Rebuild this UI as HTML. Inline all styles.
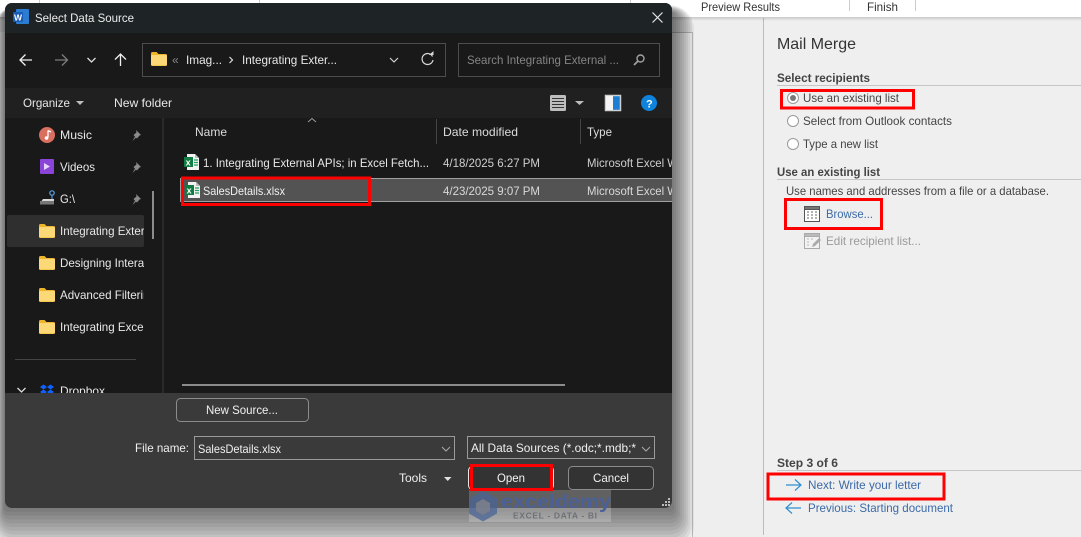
<!DOCTYPE html>
<html><head><meta charset="utf-8"><style>
html,body{margin:0;padding:0;background:#efefef;overflow:hidden}
svg{display:block;background:#efefef}
text{font-family:"Liberation Sans",sans-serif;font-size:12px}
.w text{fill:#e8e8e8}
.d text{fill:#444}
</style></head><body>
<svg width="1081" height="537" viewBox="0 0 1081 537" xmlns="http://www.w3.org/2000/svg">
<defs>
<clipPath id="side"><rect x="7" y="118" width="137" height="275"/></clipPath>
<clipPath id="main"><rect x="5" y="118" width="667" height="275"/></clipPath>
<clipPath id="dlg"><rect x="5" y="3" width="667" height="505" rx="7"/></clipPath>
<linearGradient id="rb" x1="0" y1="0" x2="0" y2="1"><stop offset="0" stop-color="#000" stop-opacity=".16"/><stop offset="1" stop-color="#000" stop-opacity="0"/></linearGradient>
<g id="folder"><path d="M0 1.500a1.500 1.500 0 0 1 1.500-1.500h4l2 2h7a1.500 1.500 0 0 1 1.500 1.500v9a1.500 1.500 0 0 1-1.500 1.500h-13a1.500 1.500 0 0 1-1.500-1.500z" fill="#f0b429"/><rect x="0" y="3" width="16" height="10.500" rx="1" fill="#fcd877"/></g>
<g id="xl"><path d="M3 0h8l4 4v12h-12z" fill="#f2f2f2"/><path d="M11 0l4 4h-4z" fill="#bbb"/><rect x="0" y="3" width="9" height="10" fill="#107c41"/><text x="1.600" y="11.600" style="font-size:9px;font-weight:bold;fill:#fff">x</text><path d="M10 6h4M10 8.500h4M10 11h4" stroke="#21a366" stroke-width="1.200"/></g>
<g id="pin"><path d="M5 0l5 5-1.500.5-2.500 3-1-1-3.500 3.500 2.500-4.500-1.500-1.500 3-2.500z" fill="#8b8b8b"/></g>
</defs>

<!-- background -->
<rect width="1081" height="537" fill="#efefef"/>
<rect x="0" y="17" width="692" height="15" fill="#e8e8e8"/>
<rect x="693" y="18" width="70" height="519" fill="#eeeeee"/>
<rect x="0" y="32" width="692" height="505" fill="#f8f8f8"/>
<rect x="672" y="32" width="21" height="1" fill="#bbb"/>
<rect x="692" y="32" width="1" height="505" fill="#bbb"/>
<rect x="763" y="18" width="1" height="517" fill="#bcbcbc"/>
<rect x="0" y="0" width="1081" height="17" fill="#fff"/>
<rect x="0" y="17" width="1081" height="4" fill="url(#rb)"/>
<rect x="39" y="0" width="1" height="3" fill="#ccc"/><rect x="259" y="0" width="1" height="3" fill="#ccc"/><rect x="630" y="0" width="1" height="3" fill="#ccc"/>
<rect x="849" y="0" width="1" height="11" fill="#ccc"/><rect x="915" y="0" width="1" height="11" fill="#ccc"/>
<text x="701" y="11" textLength="79" lengthAdjust="spacingAndGlyphs" fill="#333">Preview Results</text>
<text x="867" y="11" textLength="31" lengthAdjust="spacingAndGlyphs" fill="#333">Finish</text>

<!-- Mail merge pane -->
<text x="777" y="49" textLength="79" lengthAdjust="spacingAndGlyphs" fill="#333" style="font-size:16px">Mail Merge</text>
<text x="777" y="82" textLength="93" lengthAdjust="spacingAndGlyphs" fill="#444" style="font-weight:bold">Select recipients</text>
<rect x="777" y="85" width="304" height="1" fill="#c6c6c6"/>
<g fill="#fff" stroke="#9a9a9a"><circle cx="793" cy="98" r="5.500"/><circle cx="793" cy="121" r="5.500"/><circle cx="793" cy="144" r="5.500"/></g>
<circle cx="793" cy="98" r="3" fill="#777"/>
<g class="d">
<text x="803" y="102" textLength="96" lengthAdjust="spacingAndGlyphs">Use an existing list</text>
<text x="803" y="125" textLength="149" lengthAdjust="spacingAndGlyphs">Select from Outlook contacts</text>
<text x="803" y="148" textLength="75" lengthAdjust="spacingAndGlyphs">Type a new list</text>
<text x="786" y="195" textLength="263" lengthAdjust="spacingAndGlyphs">Use names and addresses from a file or a database.</text>
</g>
<text x="777" y="176" textLength="103" lengthAdjust="spacingAndGlyphs" fill="#444" style="font-weight:bold">Use an existing list</text>
<rect x="777" y="179" width="304" height="1" fill="#c6c6c6"/>
<!-- browse icon -->
<rect x="804.500" y="206.500" width="15" height="15" fill="#fff" stroke="#555"/>
<rect x="804.500" y="206.500" width="15" height="3" fill="#777" stroke="#555"/>
<path d="M807 212h2M811 212h2M815 212h2M807 215h2M811 215h2M815 215h2M807 218h2M811 218h2M815 218h2" stroke="#666"/>
<text x="826" y="218" textLength="47" lengthAdjust="spacingAndGlyphs" fill="#3b6aa8">Browse...</text>
<!-- edit icon -->
<rect x="804.500" y="233.500" width="15" height="15" fill="#f2f2f2" stroke="#aaa"/>
<rect x="804.500" y="233.500" width="15" height="3" fill="#bbb" stroke="#aaa"/>
<path d="M807 239h2M811 239h2M807 242h2M807 245h2" stroke="#bbb"/>
<path d="M812 247l1-3 6-6 2 2-6 6z" fill="#aaa"/>
<text x="826" y="245" textLength="95" lengthAdjust="spacingAndGlyphs" fill="#9a9a9a">Edit recipient list...</text>

<text x="777" y="467" textLength="61" lengthAdjust="spacingAndGlyphs" fill="#444" style="font-weight:bold">Step 3 of 6</text>
<rect x="777" y="470" width="304" height="1" fill="#c6c6c6"/>
<path d="M786 485h15M795 479.500l6 5.500-6 5.500" fill="none" stroke="#2f8fd0" stroke-width="1.200"/>
<text x="808" y="489" textLength="113" lengthAdjust="spacingAndGlyphs" fill="#3b6aa8">Next: Write your letter</text>
<path d="M801 508h-15M792 502.500l-6 5.500 6 5.500" fill="none" stroke="#2f8fd0" stroke-width="1.200"/>
<text x="808" y="512" textLength="145" lengthAdjust="spacingAndGlyphs" fill="#3b6aa8">Previous: Starting document</text>

<!-- shadow: stacked translucent rounded rects -->
<g fill="#000" fill-opacity=".06">
<rect x="4" y="11.400" width="670" height="500.400" rx="4"/>
<rect x="3" y="10.800" width="673" height="504.800" rx="6"/>
<rect x="2" y="10.200" width="676" height="509.200" rx="8"/>
<rect x="1" y="9.600" width="679" height="513.600" rx="10"/>
<rect x="0" y="9" width="682" height="518" rx="12"/>
<rect x="-1" y="8.400" width="685" height="522.400" rx="14"/>
<rect x="-2" y="7.800" width="688" height="526.800" rx="16"/>
<rect x="-3" y="7.200" width="691" height="531.200" rx="18"/>
<rect x="-4" y="6.600" width="694" height="535.600" rx="20"/>
<rect x="-5" y="6" width="697" height="540" rx="22"/>
<rect x="-6" y="5.400" width="700" height="544.400" rx="24"/>
</g>

<!-- dialog -->
<g clip-path="url(#dlg)">
<rect x="5" y="3" width="667" height="505" fill="#3a3a3a"/>
<rect x="5" y="3" width="667" height="30" fill="#1e2326"/>
<rect x="5" y="33" width="667" height="55" fill="#191919"/>
<rect x="5" y="88" width="667" height="30" fill="#202020"/>
<rect x="5" y="118" width="667" height="275" fill="#191919"/>
<rect x="162" y="118" width="2" height="275" fill="#2a2a2a"/>
</g>

<!-- title -->
<rect x="16" y="9" width="13" height="15" rx="1" fill="#2b7cd3"/>
<rect x="13" y="12" width="10" height="10" rx="1" fill="#1a5bb5"/>
<text x="14" y="20.500" style="font-size:8.500px;font-weight:bold;fill:#fff">W</text>
<text x="35" y="22" textLength="99" lengthAdjust="spacingAndGlyphs" fill="#ececec">Select Data Source</text>
<path d="M652.500 12.500l10 10M662.500 12.500l-10 10" stroke="#e8e8e8" stroke-width="1.200"/>

<!-- nav -->
<path d="M32 60h-11.500M25.500 54.500l-5.500 5.500 5.500 5.500" fill="none" stroke="#f0f0f0" stroke-width="1.300"/>
<path d="M55 60h12M62 54.500l5.500 5.500-5.500 5.500" fill="none" stroke="#7d7d7d" stroke-width="1.300"/>
<path d="M87.500 58l4 4 4-4" fill="none" stroke="#ddd" stroke-width="1.300"/>
<path d="M120.500 66v-11.500M115 59.500l5.500-5.500 5.500 5.500" fill="none" stroke="#f0f0f0" stroke-width="1.300"/>
<rect x="142.500" y="43.500" width="303" height="33" fill="none" stroke="#4d4d4d"/>
<use href="#folder" x="151" y="52"/>
<text x="172" y="64" fill="#888">«</text>
<g class="w">
<text x="186" y="64" textLength="36" lengthAdjust="spacingAndGlyphs">Imag...</text>
<text x="242" y="64" textLength="95" lengthAdjust="spacingAndGlyphs">Integrating Exter...</text>
</g>
<path d="M229.500 57l3 3-3 3" fill="none" stroke="#e0e0e0" stroke-width="1.200"/>
<path d="M390 58l4 4 4-4" fill="none" stroke="#ddd" stroke-width="1.100"/>
<path d="M432.500 56.500a5.500 5.500 0 1 0 .5 3.500" fill="none" stroke="#d8d8d8" stroke-width="1.200"/><path d="M429 55h4.500v-4z" fill="#d8d8d8"/>
<rect x="458.500" y="43.500" width="201" height="33" fill="none" stroke="#4d4d4d"/>
<text x="467" y="64" textLength="152" lengthAdjust="spacingAndGlyphs" fill="#858585">Search Integrating External ...</text>
<circle cx="640.500" cy="58.500" r="3.500" fill="none" stroke="#a0a0a0" stroke-width="1.400"/><path d="M638 61l-4 4" stroke="#a0a0a0" stroke-width="1.800"/>

<!-- toolbar -->
<g class="w">
<text x="23" y="107" textLength="47" lengthAdjust="spacingAndGlyphs">Organize</text>
<text x="114" y="107" textLength="58" lengthAdjust="spacingAndGlyphs">New folder</text>
</g>
<path d="M76 101h8l-4 4z" fill="#bdbdbd"/>
<rect x="550" y="95" width="16" height="16" rx="1.500" fill="#bdbdbd"/>
<path d="M552 98.500h12M552 101.500h12M552 104.500h12M552 107.500h12" stroke="#333" stroke-width="1"/>
<path d="M575 101h9l-4.500 4z" fill="#bdbdbd"/>
<rect x="605.500" y="95.500" width="15" height="15" fill="#1a7fd4" stroke="#cfcfcf" stroke-width="1.500"/>
<rect x="606" y="96" width="7" height="14" fill="#f4f4f4"/>
<circle cx="649" cy="103" r="8" fill="#0f83dc"/>
<text x="646" y="107.500" style="font-size:11px;font-weight:bold;fill:#fff">?</text>

<!-- sidebar -->
<g clip-path="url(#main)">
<rect x="7" y="215" width="137" height="32" rx="2" fill="#2f2f2f"/>
<g clip-path="url(#side)" class="w">
<text x="60" y="139" textLength="32" lengthAdjust="spacingAndGlyphs">Music</text>
<text x="60" y="171" textLength="35" lengthAdjust="spacingAndGlyphs">Videos</text>
<text x="60" y="203" textLength="15" lengthAdjust="spacingAndGlyphs">G:\</text>
<text x="60" y="235" textLength="100" lengthAdjust="spacingAndGlyphs">Integrating External</text>
<text x="60" y="267" textLength="108" lengthAdjust="spacingAndGlyphs">Designing Interactive</text>
<text x="60" y="299" textLength="96" lengthAdjust="spacingAndGlyphs">Advanced Filtering</text>
<text x="60" y="331" textLength="99" lengthAdjust="spacingAndGlyphs">Integrating Excel to</text>
<text x="60" y="395" textLength="45" lengthAdjust="spacingAndGlyphs">Dropbox</text>
</g>
<circle cx="47" cy="135" r="8" fill="#d9705f"/>
<path d="M48 130.500v7" stroke="#fff" stroke-width="1.300"/><circle cx="46.500" cy="138" r="1.800" fill="#fff"/><path d="M48 130.500l3 1.500" stroke="#fff" stroke-width="1.300"/>
<rect x="40" y="159" width="14" height="15" rx="1" fill="#8a44d8"/>
<path d="M44 163l6 3.500-6 3.500z" fill="#e6d5fa"/>
<path d="M40 203l3-4h11v5.500h-14z" fill="#d8d8d8"/><rect x="40" y="201" width="14" height="3.500" fill="#777"/><circle cx="52" cy="193" r="2.200" fill="none" stroke="#5aa5e8" stroke-width="1.200"/><path d="M52 195v4" stroke="#5aa5e8"/>
<use href="#folder" x="39" y="224"/><use href="#folder" x="39" y="256"/><use href="#folder" x="39" y="288"/><use href="#folder" x="39" y="320"/>
<use href="#pin" x="131" y="130"/><use href="#pin" x="131" y="162"/><use href="#pin" x="131" y="194"/>
<rect x="15" y="359" width="121" height="1" fill="#444"/>
<path d="M17.500 388l4 4 4-4" fill="none" stroke="#ddd" stroke-width="1.300"/>
<path d="M40 387l3.500-2.500 3.500 2.500-3.500 2.500zM47 387l3.500-2.500 3.500 2.500-3.500 2.500zM40 392l3.500-2.500 3.500 2.500-3.500 2.500zM47 392l3.500-2.500 3.500 2.500-3.500 2.500z" fill="#0f62fe"/>
<rect x="152" y="191" width="2" height="48" fill="#8c8c8c"/>

<!-- file list -->
<path d="M308 122l4-3.500 4 3.500" fill="none" stroke="#999"/>
<rect x="436" y="119" width="1" height="25" fill="#444"/><rect x="580" y="119" width="1" height="25" fill="#444"/>
<text x="195" y="136" textLength="32" lengthAdjust="spacingAndGlyphs" fill="#dcdcdc">Name</text>
<text x="443" y="136" textLength="75" lengthAdjust="spacingAndGlyphs" fill="#dcdcdc">Date modified</text>
<text x="587" y="136" textLength="25" lengthAdjust="spacingAndGlyphs" fill="#dcdcdc">Type</text>
<use href="#xl" x="184" y="154"/>
<text x="203" y="167" textLength="226" lengthAdjust="spacingAndGlyphs" fill="#e8e8e8">1. Integrating External APIs; in Excel Fetch...</text>
<text x="443" y="167" textLength="97" lengthAdjust="spacingAndGlyphs" fill="#cfcfcf">4/18/2025 6:27 PM</text>
<text x="587" y="167" textLength="91" lengthAdjust="spacingAndGlyphs" fill="#cfcfcf">Microsoft Excel W</text>
<rect x="180" y="178" width="492" height="24" fill="#535353"/>
<rect x="180" y="178" width="492" height="1" fill="#a0a0a0"/>
<rect x="180" y="201" width="492" height="1" fill="#a0a0a0"/>
<rect x="180" y="178" width="1" height="24" fill="#a0a0a0"/>
<use href="#xl" x="185" y="182"/>
<text x="203" y="195" textLength="82" lengthAdjust="spacingAndGlyphs" fill="#f0f0f0">SalesDetails.xlsx</text>
<text x="443" y="195" textLength="97" lengthAdjust="spacingAndGlyphs" fill="#d8d8d8">4/23/2025 9:07 PM</text>
<text x="587" y="195" textLength="91" lengthAdjust="spacingAndGlyphs" fill="#d8d8d8">Microsoft Excel W</text>
<rect x="182" y="384" width="383" height="2" fill="#8c8c8c"/>
</g>

<!-- bottom -->
<rect x="176.500" y="398.500" width="132" height="23" rx="4" fill="#3a3a3a" stroke="#8c8c8c"/>
<text x="206" y="414" textLength="72" lengthAdjust="spacingAndGlyphs" fill="#f0f0f0">New Source...</text>
<text x="135" y="452" textLength="54" lengthAdjust="spacingAndGlyphs" fill="#f0f0f0">File name:</text>
<rect x="194.500" y="436.500" width="260" height="23" fill="#3a3a3a" stroke="#9a9a9a"/>
<text x="198" y="453" textLength="83" lengthAdjust="spacingAndGlyphs" fill="#f0f0f0">SalesDetails.xlsx</text>
<path d="M442 447l4 4 4-4" fill="none" stroke="#aaa"/>
<rect x="467.500" y="436.500" width="187" height="22" fill="#3a3a3a" stroke="#9a9a9a"/>
<text x="471" y="452" textLength="165" lengthAdjust="spacingAndGlyphs" fill="#f0f0f0">All Data Sources (*.odc;*.mdb;*</text>
<path d="M642 447l4 4 4-4" fill="none" stroke="#aaa"/>
<text x="399" y="482" textLength="28" lengthAdjust="spacingAndGlyphs" fill="#f0f0f0">Tools</text>
<path d="M444 477h7.500l-3.750 4z" fill="#e0e0e0"/>
<rect x="468.500" y="466.500" width="85" height="23" rx="4" fill="#333" stroke="#e8e8e8"/>
<text x="497" y="482" textLength="28" lengthAdjust="spacingAndGlyphs" fill="#f5f5f5">Open</text>
<rect x="568.500" y="466.500" width="85" height="23" rx="4" fill="#333" stroke="#8c8c8c"/>
<text x="593" y="482" textLength="36" lengthAdjust="spacingAndGlyphs" fill="#f0f0f0">Cancel</text>
<path d="M668 498h2v2h-2zM665 501h2v2h-2zM668 501h2v2h-2zM662 504h2v2h-2zM665 504h2v2h-2zM668 504h2v2h-2z" fill="#bbb"/>

<!-- watermark -->
<rect x="469" y="490" width="142" height="32" fill="#fff" opacity=".2"/>
<path d="M483 491l14 7.500v15l-14 8-14-8v-15z" fill="#4a6396" opacity=".75"/>
<path d="M483 499l7 4v8l-7 4-7-4v-8z" fill="#7b7f8c" opacity=".9"/>
<text x="501" y="508" textLength="110" lengthAdjust="spacingAndGlyphs" fill="#4a6096" style="font-size:19px;font-weight:bold">exceldemy</text>
<text x="513" y="518.500" textLength="84" fill="#6f7178" style="font-size:8.500px;font-weight:bold">EXCEL - DATA - BI</text>

<!-- red boxes -->
<g fill="none" stroke="#f00" stroke-width="3">
<rect x="182.500" y="178" width="187" height="26.500"/>
<rect x="471.500" y="465.500" width="80" height="24"/>
<rect x="781.500" y="90.500" width="132" height="17.500"/>
<rect x="785.500" y="199.500" width="96" height="29"/>
<rect x="768" y="474" width="176" height="25"/>
</g>
</svg>
</body></html>
